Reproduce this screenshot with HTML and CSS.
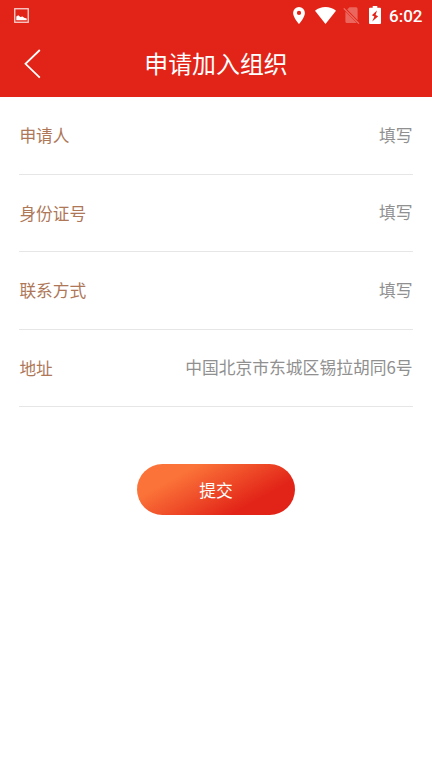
FILE: index.html
```html
<!DOCTYPE html>
<html lang="zh-CN">
<head>
<meta charset="utf-8">
<meta name="viewport" content="width=device-width, initial-scale=1">
<title>申请加入组织</title>
<link rel="stylesheet" href="styles.css">
</head>
<body>
<header class="header">
  <div class="status">
    <svg class="picture" width="15" height="15" viewBox="0 0 15 15"><rect x=".75" y=".75" width="13.5" height="13.5" fill="none" stroke="#fff" stroke-opacity=".8" stroke-width="1.3"/><path d="M2.3 12.3V8.6l2-1.4 2 1.8 2.3-.6 1.5 1.4 2.6.6v1.9z" fill="#fff"/></svg>
    <div class="indicators">
      <svg width="12" height="17" viewBox="0 0 12 17"><path fill="#fff" fill-rule="evenodd" d="M6 0a5.9 5.9 0 0 0-5.9 5.9C.1 10.3 6 17 6 17s5.9-6.7 5.9-11.1A5.9 5.9 0 0 0 6 0zm0 3.8A2.1 2.1 0 1 1 6 8a2.1 2.1 0 0 1 0-4.2z"/></svg>
      <svg class="wifi" width="21" height="17" viewBox="0 0 21 17"><path fill="#fff" d="M10.5 17 0 3.7C3 1.3 6.6 0 10.5 0S18 1.3 21 3.7z"/></svg>
      <svg class="sim" width="17" height="17" viewBox="0 0 17 17"><path fill="#fff" fill-opacity=".3" d="M6.5.3H13a1.6 1.6 0 0 1 1.6 1.6v11.4L4.2 2.6zM2.4 4.6 13.8 16H4a1.6 1.6 0 0 1-1.6-1.6z"/><path d="M.8 1.4 16 16.6" stroke="#fff" stroke-opacity=".35" stroke-width="1.3"/></svg>
      <svg class="battery" width="12" height="18" viewBox="0 0 12 18"><path fill="#fff" fill-rule="evenodd" d="M3.7 0h4.6v1.8H11a1 1 0 0 1 1 1V17a1 1 0 0 1-1 1H1a1 1 0 0 1-1-1V2.8a1 1 0 0 1 1-1h2.7zM8 4.4 2.8 9.2l2.6 1.2-2.2 5.2L9.2 10.2 6.6 9z"/></svg>
      <span class="time">6:02</span>
    </div>
  </div>
  <div class="titlebar">
    <svg class="back" width="18" height="30" viewBox="0 0 18 30"><path d="M15.8 1 1.5 14.8 15.8 28.6" fill="none" stroke="#fff" stroke-width="1.8"/></svg>
    <h1 class="title">申请加入组织</h1>
    <span></span>
  </div>
</header>
<main class="form">
  <div class="row"><span class="label">申请人</span><span class="value">填写</span></div>
  <div class="row"><span class="label">身份证号</span><span class="value">填写</span></div>
  <div class="row"><span class="label">联系方式</span><span class="value">填写</span></div>
  <div class="row"><span class="label">地址</span><span class="value">中国北京市东城区锡拉胡同6号</span></div>
  <button class="submit" type="button">提交</button>
</main>
</body>
</html>
```
FILE: styles.css
```css
* { box-sizing: border-box; }
body {
  margin: 0;
  min-height: 768px;
  background: #fff;
  font-family: Roboto, "Noto Sans CJK SC", sans-serif;
}
svg { display: block; flex: none; }
.header { height: 97px; background: #e22418; color: #fff; }
.status {
  height: 30px;
  padding: 0 9px 0 14px;
  display: flex;
  justify-content: space-between;
  align-items: center;
}
.indicators { display: flex; align-items: center; }
.wifi { margin-left: 10px; }
.sim { margin-left: 7px; }
.battery { margin-left: 9px; }
.time {
  width: 34px;
  margin-left: 8px;
  font-size: 17px;
  font-weight: 500;
  line-height: 30px;
  padding-top: 1px;
  white-space: nowrap;
}
.titlebar {
  height: 67px;
  padding: 0 24px;
  display: grid;
  grid-template-columns: 1fr auto 1fr;
  align-items: center;
}
.title { margin: 0; padding-top: 2px; font-size: 23.9px; line-height: 34px; font-weight: 400; }
.form {
  padding: 0.5px 19.4px 0;
  display: flex;
  flex-direction: column;
}
.row {
  height: 77.4px;
  display: flex;
  align-items: center;
  justify-content: space-between;
  border-bottom: 1px solid #e6e6e6;
  font-size: 16.7px;
  line-height: 24px;
}
.label { color: #ae7758; padding-top: 3.4px; }
.value {
  color: #909090;
  padding-bottom: 1.2px;
  font-family: "Noto Sans CJK SC", sans-serif;
  font-size: 16.8px;
}
.submit {
  align-self: center;
  width: 158px;
  height: 51px;
  margin-top: 57px;
  padding: 1px 0 0;
  border: 0;
  border-radius: 26px;
  background: linear-gradient(151deg, #fb7338 25%, #e22418 74%);
  color: #fff;
  font: inherit;
  font-size: 16.8px;
}
```
